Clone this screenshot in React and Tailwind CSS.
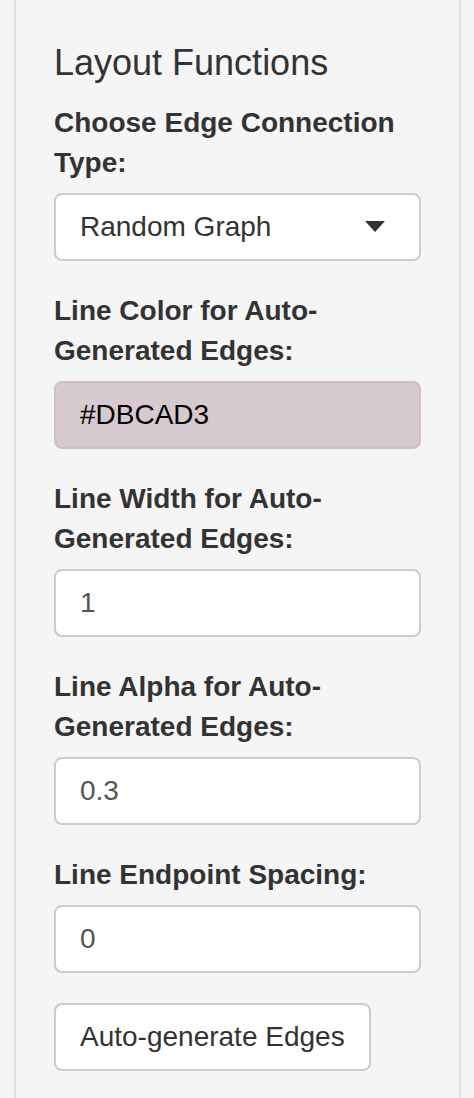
export default function App() {
  const label = "block m-0 mb-[10px] font-bold text-[28px] leading-[40px] text-[#333]";
  const box = "h-[68px] rounded-[8px] border-2 px-[24px] py-[12px] text-[28px] leading-[40px]";
  const white = "bg-white border-[#cccccc]";
  return (
    <div
      className="min-h-screen bg-[#f5f5f5] pl-[14px] pr-[13px] flex"
      style={{ fontFamily: '"Liberation Sans", Arial, sans-serif' }}
    >
      <div className="flex-1 flex flex-col border-x-2 border-[#e3e3e3] bg-[#f5f5f5] px-[38px] pt-[43px]">
        <h4 className="m-0 mb-[20px] text-[36px] leading-[1.1] font-normal text-[#333]">Layout Functions</h4>

        <div className="mb-[30px]">
          <label className={label}>Choose Edge Connection Type:</label>
          <div className={`${box} ${white} flex items-center justify-between text-[#333]`}>
            <span>Random Graph</span>
            <svg width="20" height="11" viewBox="0 0 20 11" className="mr-[10px]">
              <polygon points="0,0 20,0 10,11" fill="#333" />
            </svg>
          </div>
        </div>

        <div className="mb-[30px]">
          <label className={label}>Line Color for Auto-Generated Edges:</label>
          <div className={`${box} bg-[#d6cad0] border-[#cdc1c7] text-black`}>#DBCAD3</div>
        </div>

        <div className="mb-[30px]">
          <label className={label}>Line Width for Auto-Generated Edges:</label>
          <div className={`${box} ${white} text-[#555]`}>1</div>
        </div>

        <div className="mb-[30px]">
          <label className={label}>Line Alpha for Auto-Generated Edges:</label>
          <div className={`${box} ${white} text-[#555]`}>0.3</div>
        </div>

        <div className="mb-[30px]">
          <label className={label}>Line Endpoint Spacing:</label>
          <div className={`${box} ${white} text-[#555]`}>0</div>
        </div>

        <div>
          <button className={`${box} ${white} text-[#333] cursor-pointer`}>Auto-generate Edges</button>
        </div>
      </div>
    </div>
  );
}
